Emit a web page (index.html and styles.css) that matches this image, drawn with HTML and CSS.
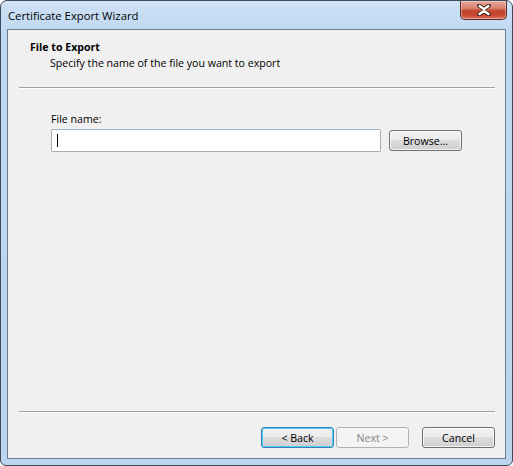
FILE: index.html
```html
<!DOCTYPE html>
<html>
<head>
<meta charset="utf-8">
<link rel="stylesheet" href="styles.css">
</head>
<body>
<div class="window">
  <div class="titlebar">
    <span class="title">Certificate Export Wizard</span>
    <div class="close">
      <svg width="16" height="12" viewBox="0 0 16 12">
        <path d="M3 1.5 L8 5 L13 1.5 M3 10.5 L8 7 L13 10.5" fill="none" stroke="#4a2a26" stroke-width="4" stroke-linecap="round"/>
        <path d="M3.5 2 L8 5.2 L12.5 2 M3.5 10 L8 6.8 L12.5 10" fill="none" stroke="#ffffff" stroke-width="2.2" stroke-linecap="round"/>
      </svg>
    </div>
  </div>
  <div class="client">
    <div class="header">
      <div class="heading">File to Export</div>
      <div class="subheading">Specify the name of the file you want to export</div>
    </div>
    <div class="sep"></div>
    <div class="body">
      <div class="label">File name:</div>
      <div class="row">
        <div class="input"><span class="caret"></span></div>
        <div class="btn browse">Browse...</div>
      </div>
    </div>
    <div class="spacer"></div>
    <div class="sep"></div>
    <div class="footer">
      <div class="btn focused">&lt; Back</div>
      <div class="btn disabled">Next &gt;</div>
      <div class="btn cancel">Cancel</div>
    </div>
  </div>
</div>
</body>
</html>
```
FILE: styles.css
```css
html, body {
  margin: 0;
  padding: 0;
  background: #ffffff;
}
body {
  width: 513px;
  height: 466px;
  font-family: "Open Sans", "Noto Sans", sans-serif;
  font-size: 10.6px;
  color: #000;
}
.window {
  box-sizing: border-box;
  width: 513px;
  height: 466px;
  border: 1px solid #3d4a58;
  border-radius: 7px 7px 6px 6px;
  background: linear-gradient(to bottom, #cfe2f6 0px, #bfd8f1 30px, #bcd5ef 100%);
  display: flex;
  flex-direction: column;
  padding: 0 6px 6px 6px;
}
.titlebar {
  height: 28px;
  display: flex;
  align-items: flex-start;
}
.title {
  font-size: 11.3px;
  line-height: 16px;
  margin-top: 7px;
  margin-left: 1px;
  color: #000;
}
.close {
  margin-left: auto;
  margin-right: -1px;
  width: 47px;
  height: 19px;
  box-sizing: border-box;
  border: 1px solid #5a2a26;
  border-top: none;
  border-radius: 0 0 5px 5px;
  background: linear-gradient(to bottom, #e8a89a 0%, #d88070 40%, #c0422c 55%, #c84a34 80%, #e07a60 100%);
  display: flex;
  align-items: center;
  justify-content: center;
  box-shadow: inset 0 0 0 1px rgba(255,255,255,0.35);
}
.client {
  flex: 1;
  border: 1px solid #6d7c8e;
  background: #f0f0f0;
  display: flex;
  flex-direction: column;
}
.header {
  padding: 9px 0 0 22px;
}
.heading {
  font-weight: bold;
  line-height: 16px;
}
.subheading {
  line-height: 16px;
  padding-left: 20px;
}
.sep {
  height: 1px;
  background: #a0a0a0;
  border-bottom: 1px solid #ffffff;
  margin: 0 10px 0 11px;
}
.header + .sep {
  margin-top: 16px;
}
.body {
  padding: 22px 0 0 43px;
}
.label {
  line-height: 16px;
}
.row {
  display: flex;
  align-items: center;
  margin-top: 2px;
}
.input {
  box-sizing: border-box;
  width: 330px;
  height: 23px;
  background: #fff;
  border: 1px solid #abadb3;
  border-top-color: #a2b5cc;
  border-radius: 2px;
  display: flex;
  align-items: center;
  padding-left: 5px;
}
.caret {
  width: 1px;
  height: 13px;
  background: #000;
}
.btn {
  box-sizing: border-box;
  width: 73px;
  height: 21px;
  border: 1px solid #707070;
  border-radius: 3px;
  background: linear-gradient(to bottom, #f2f2f2 0%, #ebebeb 49%, #dddddd 50%, #cfcfcf 100%);
  box-shadow: inset 0 0 0 1px rgba(255,255,255,0.75);
  display: flex;
  align-items: center;
  justify-content: center;
  line-height: 14px;
  color: #000;
}
.browse {
  margin-left: 8px;
}
.spacer {
  flex: 1;
}
.footer {
  display: flex;
  justify-content: flex-end;
  padding: 14px 10px 10px 0;
}
.footer .btn + .btn {
  margin-left: 2px;
}
.footer .cancel {
  margin-left: 13px !important;
}
.focused {
  border-color: #3c7fb1;
  box-shadow: inset 0 0 0 1px #48d0f8;
}
.disabled {
  border-color: #adb2b5;
  background: #f4f4f4;
  box-shadow: none;
  color: #838383;
}
```
